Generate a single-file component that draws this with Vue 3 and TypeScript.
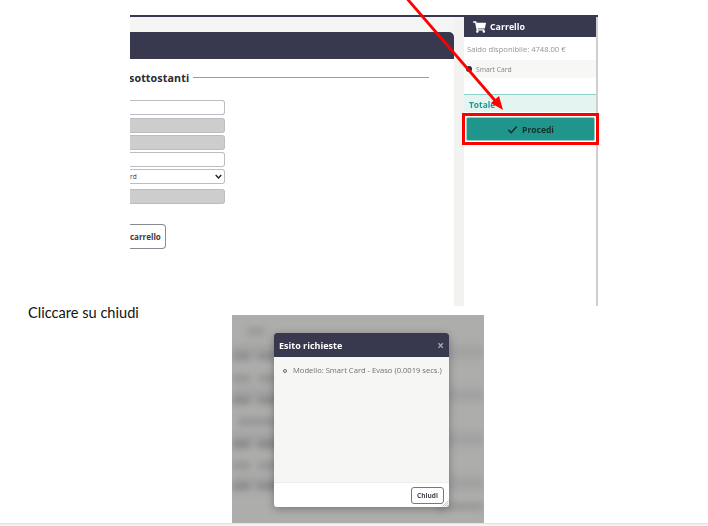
<script setup lang="ts">
// Document page with two pasted screenshots of the cart flow
const formRows = ['white', 'gray first-gray', 'gray', 'white', 'select', 'gray-last']

// blurred table behind the modal: [y, x, width, strength]
const blurRows: [number, number, number, number][] = [
  [328, 15, 18, 0.5],
  [353, 0, 18, 0.7],
  [353, 26, 20, 0.7],
  [375, 0, 18, 0.6],
  [375, 26, 20, 0.6],
  [397, 0, 18, 0.8],
  [397, 26, 20, 0.8],
  [418, 6, 40, 0.6],
  [441, 0, 18, 0.9],
  [441, 26, 20, 0.9],
  [462, 0, 18, 0.6],
  [462, 26, 20, 0.6],
  [483, 0, 18, 0.8],
  [483, 26, 20, 0.8],
  [503, 205, 47, 0.5]
]
const bands = [345, 388, 432, 476]
const cartPath =
  'M528.12 301.319l47.273-208C578.806 78.301 567.391 64 551.99 64H159.208l-9.166-44.81C147.758 8.021 137.93 0 126.529 0H24C10.745 0 0 10.745 0 24v16c0 13.255 10.745 24 24 24h69.883l70.248 343.435C147.325 417.1 136 435.222 136 456c0 30.928 25.072 56 56 56s56-25.072 56-56c0-15.674-6.447-29.835-16.824-40h209.647C430.447 426.165 424 440.326 424 456c0 30.928 25.072 56 56 56s56-25.072 56-56c0-22.172-12.888-41.332-31.579-50.405l5.517-24.276c3.413-15.018-8.002-29.319-23.403-29.319H218.117l-6.545-32h293.145c11.206 0 20.92-7.754 23.403-18.681z'
</script>

<template>
  <div class="page">
    <div class="shot-cart">
      <div class="main">
        <div class="main-strip"></div>
        <div class="main-head"></div>
        <div class="section">
          <span class="section-title">sottostanti</span>
          <span class="section-line"></span>
        </div>
        <div class="form">
          <div v-for="(row, i) in formRows" :key="i" class="field" :class="row">
            <template v-if="row === 'select'">
              <span class="select-text">rd</span>
              <svg class="chevron" viewBox="0 0 10 6" width="7" height="5">
                <path d="M1 1l4 4 4-4" fill="none" stroke="#222" stroke-width="2" />
              </svg>
            </template>
          </div>
        </div>
        <div class="add-btn">carrello</div>
      </div>
      <div class="gutter"></div>
      <aside class="cart">
        <div class="cart-head">
          <svg viewBox="0 0 576 512" width="13" height="12">
            <path :d="cartPath" fill="#fff" />
          </svg>
          <span>Carrello</span>
        </div>
        <div class="balance">Saldo disponibile: 4748.00 €</div>
        <div class="cart-item">
          <span class="item-dot"></span>
          <span>Smart Card</span>
        </div>
        <div class="total">Totale</div>
        <div class="proceed-box">
          <div class="proceed">
            <svg viewBox="0 0 14 12" width="11" height="9">
              <path d="M1.5 6.5l3.8 3.8L12.5 2" fill="none" stroke="#12302e" stroke-width="1.9" />
            </svg>
            <span>Procedi</span>
          </div>
        </div>
      </aside>
    </div>

    <div class="step">
      <p class="caption">Cliccare su chiudi</p>
      <div class="shot-modal">
        <div class="backdrop">
          <div
            v-for="y in bands"
            :key="y"
            class="band"
            :style="{ top: y - 315 + 'px' }"
          ></div>
          <div
            v-for="(row, i) in blurRows"
            :key="i"
            class="blur-row"
            :style="{ top: row[0] - 315 + 'px', left: row[1] + 'px', width: row[2] + 'px', opacity: row[3] }"
          ></div>
        </div>
        <div class="modal">
          <div class="modal-head">
            <span>Esito richieste</span>
            <span class="modal-x">×</span>
          </div>
          <div class="modal-body">
            <span class="bullet"></span>
            <span>Modello: Smart Card - Evaso (0.0019 secs.)</span>
          </div>
          <div class="modal-foot">
            <div class="close-btn">Chiudi</div>
          </div>
          <svg class="grip" viewBox="0 0 7 7" width="7" height="7">
            <path d="M0.5 6.5l6-6M2.5 6.5l4-4M4.5 6.5l2-2" stroke="#999" stroke-width="0.6" fill="none" />
          </svg>
        </div>
      </div>
    </div>

    <div class="page-end"></div>

    <svg class="arrow" width="708" height="130" viewBox="0 0 708 130">
      <line x1="406.5" y1="-2" x2="498" y2="104" stroke="#f00" stroke-width="2.8" />
      <polygon points="503,110 491,103 499,96" fill="#f00" />
    </svg>
  </div>
</template>

<style>
html,
body {
  margin: 0;
  background: #fff;
}
</style>

<style scoped>
.page {
  position: relative;
  width: 708px;
  height: 526px;
  overflow: hidden;
  padding-top: 15px;
  box-sizing: border-box;
  font-family: "Open Sans", sans-serif;
  display: flex;
  flex-direction: column;
}

.shot-cart {
  display: flex;
  margin-left: 130px;
  width: 468px;
  height: 291px;
  border-top: 2px solid #383850;
  box-sizing: border-box;
  filter: blur(0.3px);
}

.main {
  width: 324px;
  background: #fff;
  display: flex;
  flex-direction: column;
}

.main-strip {
  height: 15px;
  background: #f5f5f3;
}

.main-head {
  height: 27px;
  background: #38384e;
  border-top-right-radius: 5px;
}

.section {
  display: flex;
  align-items: center;
  gap: 4px;
  height: 13px;
  margin-top: 12px;
  width: 299px;
  overflow: hidden;
}

.section-title {
  margin-left: -1px;
  font-size: 10.7px;
  font-weight: 700;
  color: #2b2b33;
  letter-spacing: 0.1px;
}

.section-line {
  flex: 1;
  height: 1px;
  background: #9a9aa0;
}

.form {
  display: flex;
  flex-direction: column;
  gap: 2px;
  width: 95px;
  margin-top: 16px;
}

.field {
  height: 15px;
  box-sizing: border-box;
  border: 1px solid #bcbcc4;
  border-left: none;
  border-radius: 0 3px 3px 0;
  display: flex;
  align-items: center;
  justify-content: space-between;
}

.field.gray,
.field.gray-last {
  background: #cdcdcd;
}

.field.first-gray {
  margin-top: 1px;
}

.field.gray-last {
  margin-top: 3px;
}

.select-text {
  font-size: 6.5px;
  color: #333;
}

.chevron {
  margin-right: 2px;
}

.add-btn {
  width: 36px;
  height: 25px;
  margin-top: 20px;
  box-sizing: border-box;
  border: 1px solid #8a8a94;
  border-left: none;
  border-radius: 0 4px 4px 0;
  font-size: 8px;
  font-weight: 700;
  line-height: 23px;
  color: #3a3a48;
  white-space: nowrap;
  text-align: right;
  padding-right: 6px;
}

.gutter {
  width: 10px;
  background: #f2f2f0;
}

.cart {
  width: 134px;
  border-right: 2px solid #cfcfd1;
  box-sizing: border-box;
  display: flex;
  flex-direction: column;
  background: #fff;
}

.cart-head {
  height: 20px;
  background: #38384e;
  color: #fff;
  font-size: 8.8px;
  font-weight: 700;
  display: flex;
  align-items: center;
  gap: 4px;
  padding-left: 9px;
}

.balance {
  font-size: 7.6px;
  color: #949494;
  margin-top: 7px;
  margin-left: 3px;
  line-height: 11px;
  white-space: nowrap;
}

.cart-item {
  height: 18px;
  margin-top: 5px;
  background: #f7f7f5;
  display: flex;
  align-items: center;
  gap: 4px;
  padding-left: 2px;
  font-size: 6.8px;
  color: #858585;
}

.item-dot {
  width: 6px;
  height: 6px;
  border-radius: 50%;
  background: #2c2c34;
}

.total {
  height: 17px;
  margin-top: 16px;
  border-top: 1px solid #8fd2ca;
  background: #e4f4f1;
  font-size: 8.4px;
  font-weight: 700;
  line-height: 19px;
  color: #1f9a8f;
  padding-left: 5px;
}

.proceed-box {
  margin: 1px -3px 0 -2px;
  border: 3px solid #f00;
  padding: 1px;
  height: 32px;
  box-sizing: border-box;
  position: relative;
  background: #fff;
  flex: none;
}

.proceed {
  height: 100%;
  background: #20958b;
  border: 1px solid #8fd2ca;
  border-radius: 2px;
  box-sizing: border-box;
  display: flex;
  align-items: center;
  justify-content: center;
  gap: 4px;
  font-size: 8.5px;
  font-weight: 700;
  color: #12302e;
}

.step {
  display: flex;
  height: 208px;
  margin-top: 9px;
}

.caption {
  width: 204px;
  margin: -12px 0 0 28px;
  font-family: Lato, sans-serif;
  font-size: 14.6px;
  line-height: 20px;
  color: #111;
}

.shot-modal {
  position: relative;
  width: 252px;
  height: 208px;
  overflow: hidden;
  background: #adadab;
}

.backdrop {
  position: absolute;
  inset: 0;
  filter: blur(3.5px);
}

.band {
  position: absolute;
  left: 0;
  right: 0;
  height: 14px;
  background: #a2a2a2;
}

.blur-row {
  position: absolute;
  height: 7px;
  background: #828286;
}

.modal {
  position: absolute;
  left: 42px;
  top: 18px;
  width: 175px;
  height: 174px;
  border-radius: 3px;
  overflow: hidden;
  background: #fff;
  display: flex;
  flex-direction: column;
  box-shadow: 0 2px 8px rgba(0, 0, 0, 0.3);
  filter: blur(0.3px);
}

.modal-head {
  height: 24px;
  flex: none;
  background: #38384e;
  color: #fff;
  font-size: 9px;
  font-weight: 700;
  display: flex;
  align-items: center;
  justify-content: space-between;
  padding: 0 5px;
}

.modal-x {
  font-size: 12px;
  font-weight: 700;
  color: #a8a8b0;
}

.modal-body {
  flex: 1;
  background: #f6f6f4;
  border-bottom: 1px solid #ececec;
  display: flex;
  align-items: flex-start;
  gap: 6px;
  padding: 8px 0 0 9px;
  font-size: 7.6px;
  line-height: 11px;
  color: #707073;
  white-space: nowrap;
}

.bullet {
  width: 2px;
  height: 2px;
  flex: none;
  margin-top: 4px;
  border: 1px solid #66666c;
  border-radius: 50%;
}

.modal-foot {
  height: 24px;
  flex: none;
  display: flex;
  justify-content: flex-end;
  align-items: center;
  padding-right: 5px;
}

.close-btn {
  width: 33px;
  height: 17px;
  box-sizing: border-box;
  border: 1px solid #77777f;
  border-radius: 3px;
  font-size: 6.5px;
  font-weight: 700;
  line-height: 15px;
  text-align: center;
  color: #45454f;
}

.grip {
  position: absolute;
  right: 0;
  bottom: 0;
}

.page-end {
  flex: 1;
  border-top: 1px solid #e2e2e2;
  background: #f3f3f3;
}

.arrow {
  position: absolute;
  left: 0;
  top: 0;
  pointer-events: none;
}
</style>
